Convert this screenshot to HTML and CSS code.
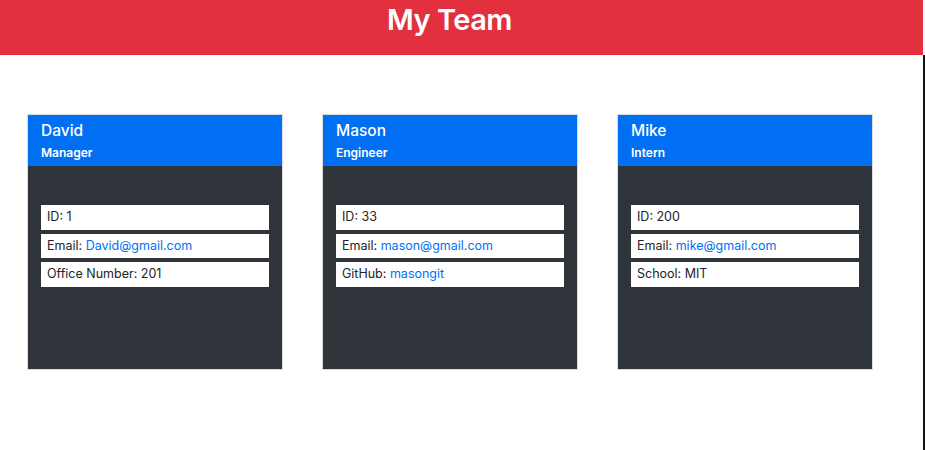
FILE: index.html
```html
<!DOCTYPE html>
<html>
<head>
<meta charset="utf-8">
<link rel="stylesheet" href="styles.css">
</head>
<body>
<div class="page">
  <header class="banner"><h1>My Team</h1></header>
  <main class="team">
    <div class="card">
      <div class="card-head">
        <div class="name">David</div>
        <div class="role">Manager</div>
      </div>
      <div class="card-body">
        <ul class="info">
          <li>ID: 1</li>
          <li>Email: <a href="#">David@gmail.com</a></li>
          <li>Office Number: 201</li>
        </ul>
      </div>
    </div>
    <div class="card">
      <div class="card-head">
        <div class="name">Mason</div>
        <div class="role">Engineer</div>
      </div>
      <div class="card-body">
        <ul class="info">
          <li>ID: 33</li>
          <li>Email: <a href="#">mason@gmail.com</a></li>
          <li>GitHub: <a href="#">masongit</a></li>
        </ul>
      </div>
    </div>
    <div class="card">
      <div class="card-head">
        <div class="name">Mike</div>
        <div class="role">Intern</div>
      </div>
      <div class="card-body">
        <ul class="info">
          <li>ID: 200</li>
          <li>Email: <a href="#">mike@gmail.com</a></li>
          <li>School: MIT</li>
        </ul>
      </div>
    </div>
  </main>
</div>
</body>
</html>
```

FILE: styles.css
```css
html, body {
  margin: 0;
  padding: 0;
  background: #fff;
}
body {
  font-family: Inter, "Noto Sans", sans-serif;
  color: #212529;
}
.page {
  width: 925px;
  height: 450px;
  display: flex;
  flex-direction: column;
}
.banner {
  width: 923px;
  height: 55px;
  background: #e2303f;
  display: flex;
  justify-content: center;
  padding-right: 24px;
  box-sizing: border-box;
}
.banner h1 {
  margin: 0;
  padding-top: 2px;
  font-size: 29px;
  font-weight: 600;
  color: #fff;
  line-height: 36px;
  letter-spacing: -0.5px;
}
.team {
  flex: 1;
  width: 925px;
  border-right: 2px solid #111;
  display: flex;
  gap: 39px;
  padding: 59px 0 0 27px;
  box-sizing: border-box;
  align-items: flex-start;
}
.card {
  width: 256px;
  flex: none;
  box-sizing: border-box;
  border: 1px solid #d9dadc;
  display: flex;
  flex-direction: column;
}
.card-head {
  background: #016ff3;
  color: #fff;
  height: 51px;
  padding: 6px 13px 0;
  box-sizing: border-box;
}
.name {
  font-size: 15.5px;
  font-weight: 500;
  line-height: 19px;
}
.role {
  font-size: 12px;
  font-weight: 600;
  line-height: 15px;
  margin-top: 5px;
}
.card-body {
  background: #2f333a;
  height: 203px;
  padding: 39px 13px 0;
  box-sizing: border-box;
}
.info {
  list-style: none;
  margin: 0;
  padding: 0;
  display: flex;
  flex-direction: column;
  gap: 4px;
}
.info li {
  background: #fff;
  height: 24.5px;
  line-height: 24.5px;
  padding: 0 6px;
  font-size: 12.5px;
  color: #212529;
}
.info a {
  color: #016ff3;
  text-decoration: none;
}
```
